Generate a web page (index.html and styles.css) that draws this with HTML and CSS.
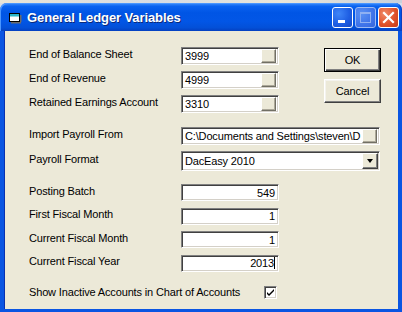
FILE: index.html
```html
<!DOCTYPE html>
<html lang="en">
<head>
    <meta charset="UTF-8">
    <title>General Ledger Variables</title>
    <link rel="stylesheet" href="styles.css">
</head>
<body>
    <div class="desktop"></div>
    <div class="window">
        <div class="titlebar">
            <svg class="app-icon" width="14" height="12" viewBox="0 0 14 12">
                <rect x="1.5" y="1.5" width="10" height="8" fill="#fff" stroke="#000"/>
                <rect x="2" y="2" width="9" height="2.5" fill="#2bb5c8"/>
                <rect x="12" y="3" width="1.5" height="7" fill="#6b6b6b"/>
                <rect x="3" y="10" width="10" height="1.5" fill="#6b6b6b"/>
            </svg>
            <span class="title">General Ledger Variables</span>
            <div class="controls">
                <div class="ctl ctl-min"><span class="min-bar"></span></div>
                <div class="ctl ctl-max disabled"><span class="max-box"></span></div>
                <div class="ctl ctl-close">
                    <svg width="13" height="13" viewBox="0 0 13 13">
                        <path d="M2 2 L11 11 M11 2 L2 11" stroke="#fff" stroke-width="2.2" stroke-linecap="square"/>
                    </svg>
                </div>
            </div>
        </div>
        <div class="client">
            <div class="top">
                <div class="group">
                    <div class="row">
                        <label>End of Balance Sheet</label>
                        <div class="field lookup"><span class="val">3999</span><span class="mini-btn"></span></div>
                    </div>
                    <div class="row">
                        <label>End of Revenue</label>
                        <div class="field lookup"><span class="val">4999</span><span class="mini-btn"></span></div>
                    </div>
                    <div class="row">
                        <label>Retained Earnings Account</label>
                        <div class="field lookup"><span class="val">3310</span><span class="mini-btn"></span></div>
                    </div>
                </div>
                <div class="actions">
                    <button class="btn default">OK</button>
                    <button class="btn">Cancel</button>
                </div>
            </div>

            <div class="group payroll">
                <div class="row">
                    <label>Import Payroll From</label>
                    <div class="field lookup wide"><span class="val">C:\Documents and Settings\steven\D</span><span class="mini-btn"></span></div>
                </div>
                <div class="row">
                    <label>Payroll Format</label>
                    <div class="field combo wide">
                        <span class="val">DacEasy 2010</span>
                        <span class="drop-btn"><span class="arrow"></span></span>
                    </div>
                </div>
            </div>

            <div class="group fiscal">
                <div class="row">
                    <label>Posting Batch</label>
                    <div class="field num"><span class="val">549</span></div>
                </div>
                <div class="row">
                    <label>First Fiscal Month</label>
                    <div class="field num"><span class="val">1</span></div>
                </div>
                <div class="row">
                    <label>Current Fiscal Month</label>
                    <div class="field num"><span class="val">1</span></div>
                </div>
                <div class="row">
                    <label>Current Fiscal Year</label>
                    <div class="field num"><span class="val">2013<span class="caret"></span></span></div>
                </div>
            </div>

            <div class="check-row">
                <label>Show Inactive Accounts in Chart of Accounts</label>
                <span class="checkbox">
                    <svg width="9" height="9" viewBox="0 0 9 9">
                        <path d="M1 4 L3 6 L8 1 L8 3 L3 8 L1 6 Z" fill="#000"/>
                    </svg>
                </span>
            </div>
        </div>
    </div>
</body>
</html>
```

FILE: styles.css
```css
body {
    margin: 0;
    width: 402px;
    height: 312px;
    overflow: hidden;
    background-color: #d8dde6;
    font-family: 'Liberation Sans', Arial, sans-serif;
    font-size: 11px;
    letter-spacing: -0.15px;
    color: #000;
}
.desktop {
    height: 3px;
    background: linear-gradient(90deg, #e9e4d6 0%, #d7dce4 40%, #eae6d8 70%, #c9d0dc 100%);
}
.window {
    display: flex;
    flex-direction: column;
    height: 309px;
}
.titlebar {
    height: 28px;
    flex: none;
    display: flex;
    align-items: center;
    padding-left: 8px;
    border-radius: 7px 7px 0 0;
    background: linear-gradient(#3d8ffb 0%, #0a62f0 12%, #0055e5 35%, #0256e6 65%, #0350d8 88%, #0440c0 100%);
    box-shadow: inset 1px 1px #4a96ff, inset -1px 0 #0a3ec0;
}
.app-icon {
    flex: none;
    margin-top: 2px;
}
.title {
    margin-left: 5px;
    color: #fff;
    font-size: 13px;
    font-weight: bold;
    letter-spacing: -0.1px;
    text-shadow: 1px 1px #0c2a7a;
    flex: 1;
}
.controls {
    display: flex;
    gap: 2px;
    padding-right: 3px;
    align-self: flex-start;
    margin-top: 4px;
}
.ctl {
    width: 19px;
    height: 19px;
    border: 1px solid #fff;
    border-radius: 3px;
    background: radial-gradient(circle at 30% 30%, #3f86f8 0%, #1f5fe4 55%, #1549c8 100%);
    display: flex;
    align-items: center;
    justify-content: center;
    box-sizing: content-box;
}
.ctl-min {
    align-items: flex-end;
    justify-content: flex-start;
}
.min-bar {
    width: 7px;
    height: 3px;
    background: #fff;
    margin: 0 0 4px 5px;
}
.ctl.disabled {
    background: radial-gradient(circle at 30% 30%, #5a90f3 0%, #3f74ea 60%, #3566dc 100%);
    border-color: #9dbaf3;
}
.max-box {
    width: 9px;
    height: 8px;
    border: 1px solid #8fb0f2;
    border-top-width: 2px;
}
.ctl-close {
    background: radial-gradient(circle at 30% 30%, #f08a68 0%, #e0522b 55%, #c63c18 100%);
}
.client {
    flex: 1;
    background-color: #ece9d8;
    border-left: 4px solid #0a55e2;
    border-right: 4px solid #0a55e2;
    border-bottom: 3px solid #0a55e2;
    padding: 16px 17px 0 25px;
    box-shadow: inset 1px 0 #0831b0;
}
.top {
    display: flex;
    justify-content: space-between;
}
.group {
    display: flex;
    flex-direction: column;
    gap: 6px;
}
.row {
    display: grid;
    grid-template-columns: 152px auto;
    align-items: center;
}
.row label {
    padding-bottom: 4px;
    white-space: nowrap;
}
.field {
    height: 14px;
    border: 1px solid;
    border-color: #808080 #fff #fff #808080;
    box-shadow: inset 1px 1px #404040, inset -1px -1px #d4d0c8;
    background: #fff;
    display: flex;
    align-items: center;
    padding: 1px 2px 1px 2px;
    box-sizing: content-box;
    overflow: hidden;
    white-space: nowrap;
}
.field.lookup {
    width: 92px;
}
.field.wide {
    width: 193px;
}
.field .val {
    flex: 1;
    overflow: hidden;
    padding-left: 1px;
}
.mini-btn {
    flex: none;
    width: 13px;
    height: 12px;
    background: #ece9d8;
    border: 1px solid;
    border-color: #fff #716f64 #716f64 #fff;
    box-shadow: inset -1px -1px #aca899;
}
.field.combo {
    height: 16px;
    padding: 1px 1px 1px 2px;
    width: 194px;
}
.drop-btn {
    flex: none;
    width: 14px;
    height: 14px;
    background: #ece9d8;
    border: 1px solid;
    border-color: #fff #404040 #404040 #fff;
    box-shadow: inset -1px -1px #808080;
    display: flex;
    align-items: center;
    justify-content: center;
}
.arrow {
    width: 0;
    height: 0;
    border-left: 3.5px solid transparent;
    border-right: 3.5px solid transparent;
    border-top: 4px solid #000;
}
.actions {
    display: flex;
    flex-direction: column;
    gap: 7px;
    padding-top: 1px;
}
.btn {
    width: 57px;
    height: 24px;
    font-family: inherit;
    font-size: 11px;
    letter-spacing: -0.15px;
    color: #000;
    background: #ece9d8;
    border: 1px solid;
    border-color: #fff #404040 #404040 #fff;
    box-shadow: inset -1px -1px #808080, inset 1px 1px #f4f3ee;
    padding: 0;
}
.btn.default {
    border: 1px solid #000;
    box-shadow: inset 1px 1px #fff, inset -1px -1px #404040, inset -2px -2px #808080;
}
.payroll {
    margin-top: 14px;
}
.fiscal {
    margin-top: 13px;
    gap: 6.5px;
}
.field.num {
    width: 92px;
    height: 13px;
}
.field.num .val {
    text-align: right;
    padding-right: 1px;
}
.caret {
    display: inline-block;
    width: 1px;
    height: 12px;
    background: #000;
    vertical-align: -2px;
}
.check-row {
    display: grid;
    grid-template-columns: 235px auto;
    align-items: center;
    margin-top: 14px;
}
.check-row label {
    padding-bottom: 2px;
}
.checkbox {
    width: 11px;
    height: 11px;
    border: 1px solid;
    border-color: #808080 #fff #fff #808080;
    box-shadow: inset 1px 1px #404040, inset -1px -1px #d4d0c8;
    background: #fff;
    display: flex;
    align-items: center;
    justify-content: center;
}
```
